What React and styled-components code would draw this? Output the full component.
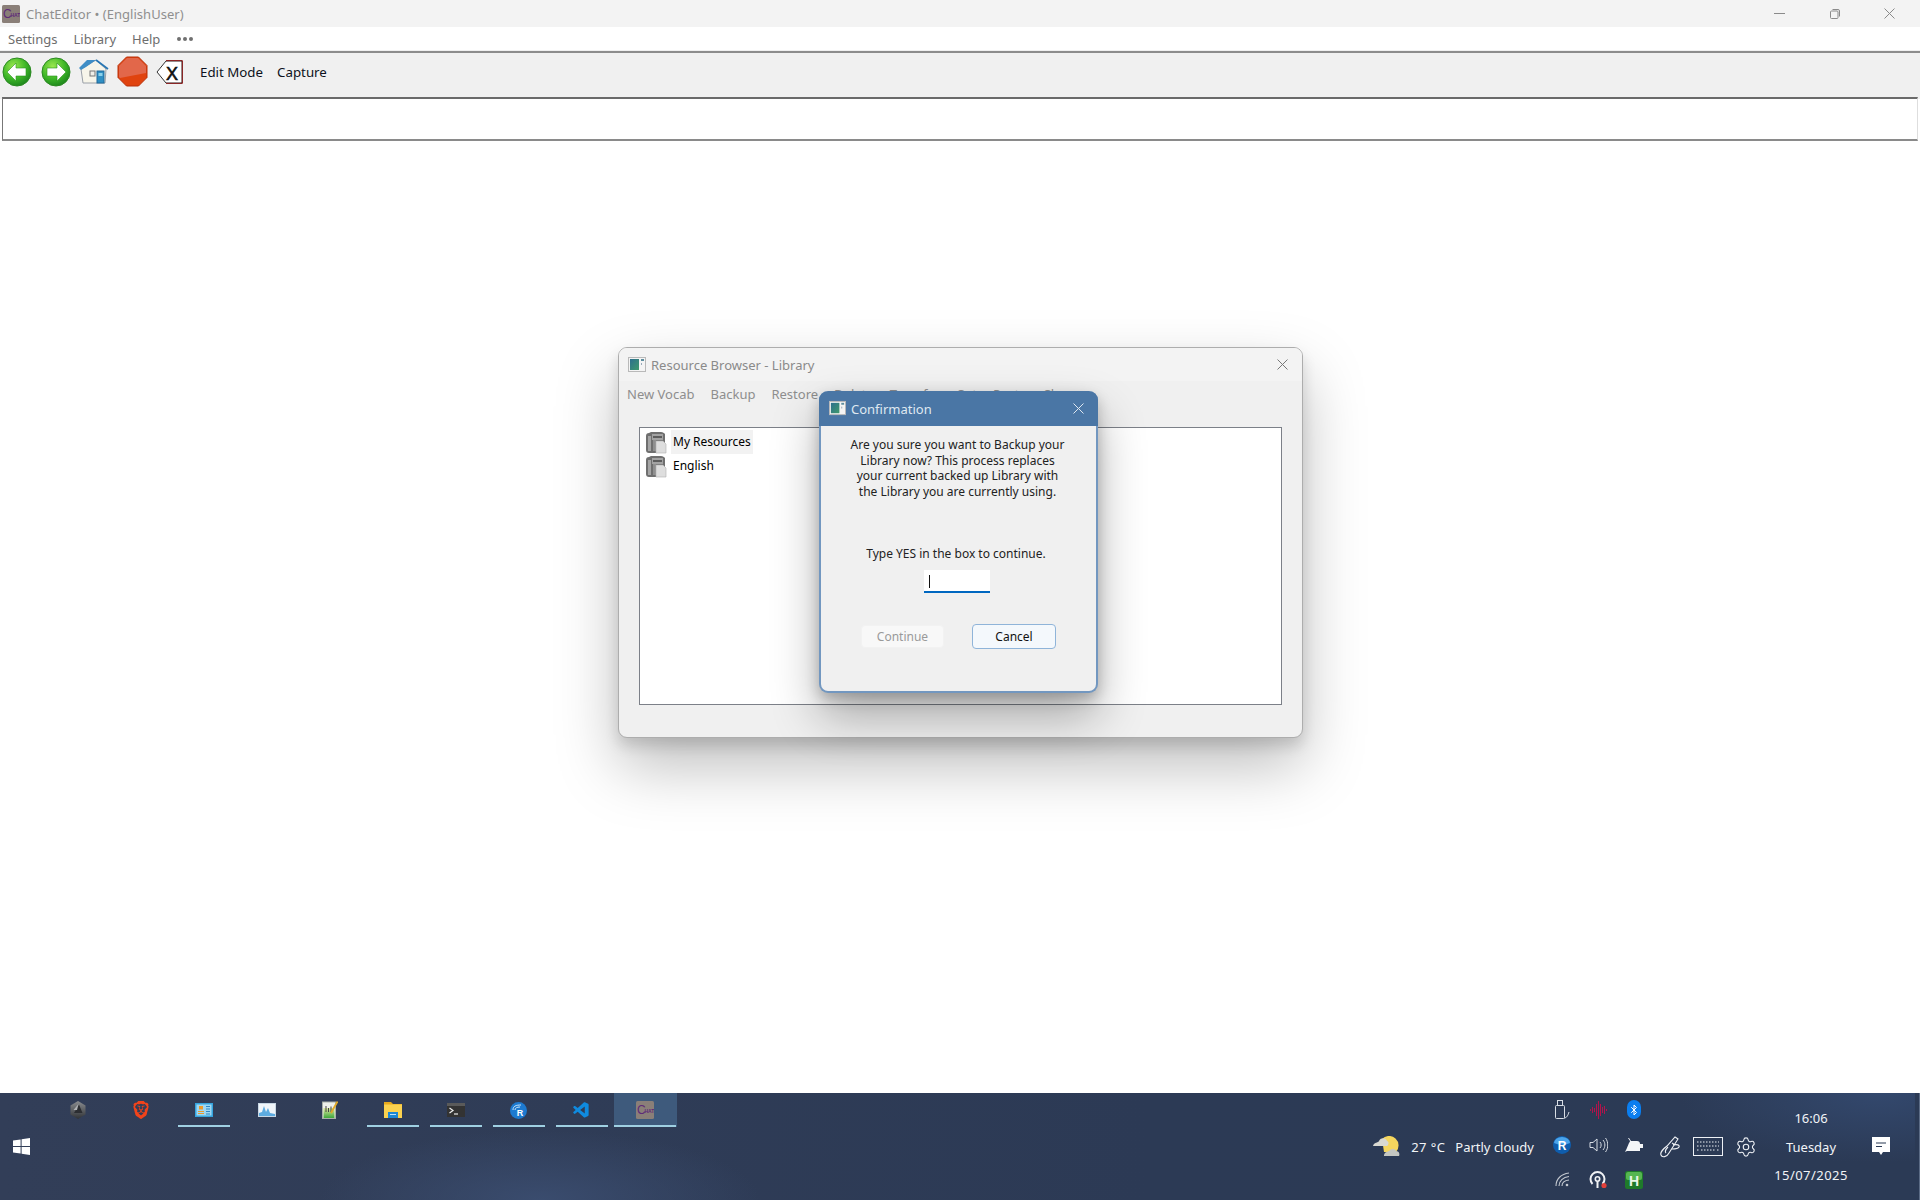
import React from "react";
import styled, { createGlobalStyle } from "styled-components";
import { SiBrave } from "react-icons/si";
import { VscVscode } from "react-icons/vsc";
import { Bluetooth, Settings as Gear } from "lucide-react";

const Global = createGlobalStyle`
  html, body { margin: 0; padding: 0; background: #fff; }
  * { box-sizing: border-box; }
  body { font-family: "Noto Sans", "Liberation Sans", sans-serif; }
  svg { display: block; flex: none; }
`;

const Page = styled.div`
  width: 1920px;
  height: 1200px;
  display: flex;
  flex-direction: column;
  overflow: hidden;
  background: #fff;
`;

const TitleBar = styled.header`
  height: 27px;
  background: #f3f3f3;
  display: flex;
  align-items: center;
  padding-left: 2px;
`;
const TitleText = styled.span`
  margin-left: 6px;
  font-size: 13px;
  letter-spacing: .03px;
  color: #8f8f8f;
  flex: 1;
`;
const WinControls = styled.div`
  display: flex;
  align-items: center;
  margin-right: 3px;
`;
const WinControl = styled.div`
  width: 55px;
  display: flex;
  justify-content: center;
`;

const MenuBar = styled.nav`
  height: 24px;
  background: #fff;
  display: flex;
  align-items: center;
  gap: 16px;
  padding-left: 8px;
  font-size: 13px;
  color: #6e6e6e;
  border-bottom: 1px solid #f0f0f0;
`;
const Dots = styled.span`
  display: flex;
  gap: 2px;
  margin-left: 1px;
  span { width: 4px; height: 4px; border-radius: 50%; background: #707070; }
`;

const Toolbar = styled.div`
  height: 46px;
  background: #f0f0f0;
  border-top: 2px solid #8c8c8c;
  display: flex;
  align-items: center;
  padding: 0 0 7px 2px;
`;
const ToolIcon = styled.div`
  width: ${p => p.$w}px;
  margin-right: ${p => p.$mr}px;
`;
const ToolText = styled.span`
  font-size: 13.3px;
  color: #0d1220;
  margin-right: ${p => p.$mr || 0}px;
`;

const AddressRow = styled.div`
  height: 44px;
  padding: 0 2px;
  background: linear-gradient(#f0f0f0 0 2px, #fff 2px);
`;
const AddressBox = styled.div`
  height: 44px;
  background: #fff;
  border: 1px solid #dedede;
  border-top: 2px solid #6a6a6a;
  border-left: 1px solid #777;
  border-bottom: 2px solid #8a8a8a;
`;

const Desktop = styled.main`
  flex: 1;
  position: relative;
`;

const ResourceWindow = styled.section`
  position: absolute;
  left: 618px;
  top: 206px;
  width: 685px;
  height: 391px;
  background: #f0f0f0;
  border: 1px solid #adadad;
  border-radius: 9px;
  box-shadow: 0 8px 14px rgba(0,0,0,.13), 0 28px 62px rgba(0,0,0,.26);
  display: flex;
  flex-direction: column;
`;
const WinHead = styled.div`
  height: 33px;
  background: #f3f3f3;
  border-radius: 8px 8px 0 0;
  display: flex;
  align-items: center;
  padding: 0 14px 0 9px;
  font-size: 13px;
  color: #8a8a8a;
  gap: 5px;
  span { flex: 1; }
`;
const WinMenu = styled.div`
  display: flex;
  gap: 16px;
  padding: 0 0 0 8px;
  height: 25px;
  align-items: center;
  font-size: 13px;
  color: #8e8e8e;
`;
const ListBox = styled.div`
  margin: 21px 20px 0 20px;
  height: 278px;
  background: #fff;
  border: 1px solid #7c8088;
  padding: 2px 5px;
  display: flex;
  flex-direction: column;
`;
const ListRow = styled.div`
  display: flex;
  align-items: center;
  height: 24px;
  gap: 3px;
  font-size: 12px;
  color: #000;
`;
const ListLabel = styled.span`
  padding: 3px 2px 4px;
  line-height: 17px;
  background: ${p => (p.$sel ? "#f2f2f2" : "transparent")};
`;

const Dialog = styled.section`
  position: absolute;
  left: 819px;
  top: 250px;
  width: 279px;
  height: 302px;
  background: #f0f0f0;
  border: 2px solid #7297c0;
  border-top: 0;
  border-radius: 9px;
  box-shadow: 0 6px 14px rgba(0,0,0,.22), 0 24px 48px rgba(0,0,0,.3);
  display: flex;
  flex-direction: column;
  align-items: center;
`;
const DialogHead = styled.div`
  align-self: stretch;
  margin: 0 -2px;
  height: 35px;
  background: #4a76a5;
  border-radius: 9px 9px 0 0;
  display: flex;
  align-items: center;
  padding: 0 14px 0 10px;
  gap: 5px;
  font-size: 13px;
  color: #dfe8f1;
  span { flex: 1; }
`;
const Message = styled.p`
  margin: 11px 2px 0 0;
  width: 220px;
  font-size: 12px;
  line-height: 15.6px;
  text-align: center;
  color: #222;
`;
const Prompt = styled.p`
  margin: 47px 5px 0 0;
  font-size: 12px;
  line-height: 16px;
  color: #222;
`;
const TypeBox = styled.div`
  margin: 8px 3px 0 0;
  width: 66px;
  height: 23px;
  background: #fff;
  border-bottom: 2px solid #0067c0;
  padding: 5px 0 0 5px;
  i { display: block; width: 1px; height: 13px; background: #111; }
`;
const Buttons = styled.div`
  margin-top: 31px;
  display: flex;
  gap: 28px;
  align-items: center;
`;
const DialogButton = styled.div`
  width: ${p => (p.$primary ? 84 : 83)}px;
  height: ${p => (p.$primary ? 25 : 23)}px;
  display: flex;
  align-items: center;
  justify-content: center;
  font-size: 12px;
  border-radius: 4px;
  color: ${p => (p.$primary ? "#111" : "#9a9a9a")};
  background: ${p => (p.$primary ? "#f4f8fc" : "#f8f8f8")};
  border: 1px solid ${p => (p.$primary ? "#8fb4d9" : "#f2f2f2")};
`;

const Taskbar = styled.footer`
  height: 107px;
  flex: none;
  color: #f2f4f7;
  display: flex;
  border-right: 1px solid #5b6b85;
  box-shadow: inset -4px 0 0 #2b3a55;
  background:
    radial-gradient(ellipse 220px 70px at 540px 107px, #3a4c6e 0%, rgba(58,76,110,0) 100%),
    radial-gradient(ellipse 200px 70px at 1880px 0, #33486d 0%, rgba(51,72,109,0) 100%),
    linear-gradient(90deg, #323e58, #2c3a55 60%, #2b3a55);
`;
const TaskLeft = styled.div`
  flex: 1;
  display: flex;
  flex-direction: column;
`;
const TaskRow = styled.div`
  display: flex;
  padding-left: 47px;
  height: 34px;
`;
const TaskButton = styled.div`
  width: 63px;
  height: 34px;
  display: flex;
  align-items: center;
  justify-content: center;
  position: relative;
  padding: 0 2px 0 0;
  background: ${p => (p.$active ? "#3e5a7c" : "transparent")};
  &::after {
    content: "";
    display: ${p => (p.$running ? "block" : "none")};
    position: absolute;
    bottom: 0;
    left: ${p => (p.$active ? 0 : 5)}px;
    right: ${p => (p.$active ? 1 : 6)}px;
    height: 2px;
    background: #9fd0e2;
  }
`;
const StartButton = styled.div`
  margin: 11px 0 0 13px;
  width: 17px;
`;
const Weather = styled.div`
  display: flex;
  align-items: center;
  font-size: 13px;
  margin-right: 10px;
`;
const WeatherTemp = styled.span`
  margin: 0 10px 0 11px;
  letter-spacing: .4px;
`;
const Tray = styled.div`
  display: grid;
  grid-template-columns: repeat(3, 36px);
  grid-template-rows: repeat(3, 35px);
  align-items: center;
  justify-items: center;
  width: 108px;
  align-self: flex-start;
  margin-top: -1px;
`;
const TrayExtras = styled.div`
  display: flex;
  align-items: center;
  gap: 12px;
  margin-left: 8px;
`;
const Clock = styled.div`
  width: 92px;
  margin-left: 8px;
  align-self: flex-start;
  padding-top: 16px;
  display: flex;
  flex-direction: column;
  align-items: center;
  font-size: 13px;
  line-height: 18px;
  gap: 11px;
`;
const ClockDate = styled.span`
  margin-top: -1px;
  letter-spacing: .45px;
`;
const Notify = styled.div`
  margin: 0 29px 0 15px;
  align-self: center;
`;

const AppLogo = ({ s = 18 }) => (
  <svg width={s} height={s} viewBox="0 0 18 18">
    <rect width="18" height="18" rx="1.5" fill="#8a7f78" />
    <text x="1" y="13" fontSize="12" fontFamily="Liberation Sans" fill="#5e2a78">C</text>
    <text x="8.5" y="12" fontSize="5" fontWeight="700" fontFamily="Liberation Sans" fill="#5e2a78">HAT</text>
  </svg>
);

const WinIcon = ({ s = 18 }) => (
  <svg width={s} height={s} viewBox="0 0 18 18">
    <defs>
      <linearGradient id="wi" x1="0" y1="0" x2="1" y2="1">
        <stop offset="0" stopColor="#2d6f8e" />
        <stop offset="1" stopColor="#3f9a6c" />
      </linearGradient>
    </defs>
    <rect x=".5" y="1.5" width="17" height="14" fill="#f4f4f4" stroke="#b9b9b9" />
    <rect x="2" y="3" width="9" height="11" fill="url(#wi)" />
    <rect x="13" y="3" width="3" height="2" fill="#5d8d9e" />
    <rect x="13" y="7" width="1" height="2" fill="#9ab" />
  </svg>
);

const Cross = ({ s = 11, c = "#777", w = 1 }) => (
  <svg width={s} height={s} viewBox="0 0 11 11" fill="none" stroke={c} strokeWidth={w}>
    <path d="M.5 .5 L10.5 10.5 M10.5 .5 L.5 10.5" />
  </svg>
);

const MinimizeGlyph = () => (
  <svg width="11" height="11" viewBox="0 0 11 11" stroke="#8a8a8a">
    <path d="M0 5.5 H11" />
  </svg>
);

const GreenArrow = ({ dir, id }) => (
  <svg width="30" height="30" viewBox="0 0 30 30">
    <defs>
      <radialGradient id={id} cx=".38" cy=".3" r=".8">
        <stop offset="0" stopColor="#9be84f" />
        <stop offset=".55" stopColor="#3db627" />
        <stop offset="1" stopColor="#157a1a" />
      </radialGradient>
    </defs>
    <circle cx="15" cy="15" r="14" fill={`url(#${id})`} stroke="#2c8a22" />
    <path
      d={dir === "l" ? "M5 15 L14 6 V11 H24 V19 H14 V24 Z" : "M25 15 L16 6 V11 H6 V19 H16 V24 Z"}
      fill="#fff"
      stroke="#2a9420"
      strokeWidth=".6"
    />
  </svg>
);

const HouseIcon = () => (
  <svg width="31" height="27" viewBox="0 0 31 27">
    <path d="M3 11 L5 25 L27 25 L28 11 L18 2 Z" fill="#f7f5ea" stroke="#9aa0a8" />
    <path d="M1 10 L9 2 H18 L8 9 L3 12 Z" fill="#3f8ec6" />
    <path d="M18 2 L30 11" fill="none" stroke="#2876b4" strokeWidth="1.6" />
    <rect x="12" y="13" width="5" height="5" fill="#f0efe8" stroke="#777" />
    <rect x="19" y="13" width="7" height="12" fill="#2f8fc4" stroke="#20689a" />
    <rect x="20.5" y="15" width="4" height="3" fill="#8cd1ea" />
  </svg>
);

const StopIcon = () => (
  <svg width="31" height="31" viewBox="0 0 31 31">
    <path d="M9.5 1 H21.5 L30 9.5 V21.5 L21.5 30 H9.5 L1 21.5 V9.5 Z" fill="#e0430f" stroke="#b8300a" />
    <path d="M10 2 H21 L29 10 V17 L3 22 L2 21 V10 Z" fill="#e2674a" />
  </svg>
);

const ClearIcon = () => (
  <svg width="27" height="24" viewBox="0 0 27 24">
    <path d="M1 12 L10 1 H26 V23 H10 Z" fill="#fff" stroke="#000" strokeWidth=".8" />
    <path d="M10 .6 H26.4 V23.4 H10" fill="none" stroke="#8a1a1a" strokeWidth="1" />
    <text x="10" y="20" fontSize="18" fontWeight="400" fontFamily="Liberation Sans" fill="#111" stroke="#111" strokeWidth=".6">X</text>
  </svg>
);

const LibIcon = () => (
  <svg width="23" height="23" viewBox="0 0 23 23">
    <path d="M1 5 C1 3 2 2 4 2 L6 1 H16 C18 1 19 2 20 3 V21 C20 22 19 22 18 22 H4 C2 22 1 21 1 19 Z" fill="#6f6f6f" />
    <rect x="3" y="5" width="3" height="15" fill="#a5a5a5" />
    <rect x="7" y="3" width="11" height="6" fill="#a3a3a3" />
    <rect x="8" y="5" width="9" height="2" fill="#5d5d5d" />
    <rect x="8" y="9" width="3" height="11" fill="#8f8f8f" />
    <path d="M11 10 H18 L21 13 V22 H11 Z" fill="#dedede" stroke="#b0b0b0" strokeWidth=".6" />
  </svg>
);

const HexShield = () => (
  <svg width="16" height="18" viewBox="0 0 16 18">
    <defs>
      <linearGradient id="hex" x1="0" y1="0" x2="0" y2="1">
        <stop offset="0" stopColor="#8b8d90" />
        <stop offset="1" stopColor="#2f3236" />
      </linearGradient>
    </defs>
    <path d="M8 0 L15.5 4.5 V13.5 L8 18 L.5 13.5 V4.5 Z" fill="url(#hex)" />
    <path d="M9 3.5 L12.5 12 H4 Z" fill="#2c2e32" />
    <path d="M3.5 9 L8.5 3 L7 9 Z" fill="#b0b2b5" />
  </svg>
);

const ChartApp = () => (
  <svg width="18" height="14" viewBox="0 0 18 14">
    <rect width="18" height="14" fill="#35a4de" />
    <rect x="1.5" y="1.5" width="15" height="11" fill="#9fd7f2" />
    <path d="M4 3 H8 V6.5 H4 Z" fill="#ec9a2c" />
    <path d="M3 8.5 H9 M3 10.5 H9" stroke="#e79b30" />
    <path d="M11 3.5 H15 M11 6 H15 M11 8.5 H15 M11 11 H15" stroke="#2f86c4" />
  </svg>
);

const MonitorApp = () => (
  <svg width="18" height="14" viewBox="0 0 18 14">
    <rect width="18" height="14" fill="#c8d7e4" />
    <rect x="1" y="1" width="16" height="12" fill="#f0f5f9" />
    <path d="M1 10 L4 9 L6 3 L8 9 L10 5 L12 10 L17 11 V13 H1 Z" fill="#5cabe0" />
  </svg>
);

const NotepadApp = () => (
  <svg width="16" height="18" viewBox="0 0 16 18">
    <defs>
      <linearGradient id="np" x1="0" y1="0" x2="0" y2="1">
        <stop offset="0" stopColor="#dfe8a0" />
        <stop offset="1" stopColor="#3ea83a" />
      </linearGradient>
    </defs>
    <rect x=".5" y="1" width="13" height="16.5" fill="#eef0ea" stroke="#aab0a8" />
    <rect x="1.5" y="7" width="11" height="10" fill="url(#np)" />
    <path d="M4 5 V11 M6.5 7 V11 M9 5.5 V11" stroke="#444" strokeWidth="1" />
    <path d="M15.5 .5 L9 12" stroke="#e0a828" strokeWidth="1.8" />
  </svg>
);

const FolderApp = () => (
  <svg width="18" height="16" viewBox="0 0 18 16">
    <path d="M0 0 H7 L9 2 H18 V16 H0 Z" fill="#e7a91d" />
    <rect y="2.5" width="18" height="13.5" fill="#fbd24f" />
    <rect x="4" y="10" width="10" height="6" fill="#1b87d6" />
    <rect x="6" y="12" width="6" height="1" fill="#bfe3f9" />
  </svg>
);

const TermApp = () => (
  <svg width="18" height="14" viewBox="0 0 18 14">
    <rect width="18" height="14" fill="#333" />
    <rect width="18" height="3" fill="#5a5a5a" />
    <path d="M2.5 5 L6 7.5 L2.5 10" fill="none" stroke="#eee" strokeWidth="1.2" />
    <path d="M7 11 H11" stroke="#eee" strokeWidth="1.2" />
  </svg>
);

const RApp = () => (
  <svg width="17" height="17" viewBox="0 0 17 17">
    <circle cx="8.5" cy="8.5" r="8.5" fill="#1d7ad0" />
    <path d="M3 8 C3 4 6 3 11 3 M5 8 C5 6 7 5 10 5" fill="none" stroke="#cfe7fa" />
    <text x="10" y="14" textAnchor="middle" fontSize="9" fontWeight="700" fontFamily="Liberation Sans" fill="#fff">R</text>
  </svg>
);

const UsbIcon = () => (
  <svg width="15" height="19" viewBox="0 0 15 19" fill="none" stroke="#d8dde4">
    <rect x=".5" y="5.5" width="9" height="13" rx="1" />
    <rect x="2.5" y=".5" width="5" height="5" />
    <path d="M9 18 C12 18 13 15 14 12" />
  </svg>
);

const WaveIcon = () => (
  <svg width="17" height="18" viewBox="0 0 17 18" stroke="#b3124a" strokeWidth="1">
    <path d="M.5 8 V10 M2.5 6 V12 M4.5 7 V11 M6.5 3 V15 M8.5 0 V18 M10.5 3 V15 M12.5 6 V12 M14.5 5 V13 M16.5 8 V10" />
  </svg>
);

const BtBadge = styled.div`
  width: 14px;
  height: 19px;
  border-radius: 7px;
  background: #0a7ef0;
  display: flex;
  align-items: center;
  justify-content: center;
`;

const RBall = () => (
  <svg width="18" height="18" viewBox="0 0 18 18">
    <circle cx="9" cy="9" r="9" fill="#0f5dad" />
    <path d="M1 7 A8 6 0 0 1 17 7 A10 4 0 0 1 1 7Z" fill="#4aa3ea" />
    <text x="9" y="13.5" textAnchor="middle" fontSize="12" fontWeight="700" fontFamily="Liberation Sans" fill="#fff">R</text>
  </svg>
);

const SpeakerIcon = () => (
  <svg width="19" height="16" viewBox="0 0 19 16" fill="none" stroke="#d8dde4">
    <path d="M1 5.5 H4 L8 2 V14 L4 10.5 H1 Z" />
    <path d="M11 5 C12.5 6.5 12.5 9.5 11 11 M14 3 C16.5 6 16.5 10 14 13 M16.5 1 C19.5 5 19.5 11 16.5 15" />
  </svg>
);

const PlugIcon = () => (
  <svg width="18" height="14" viewBox="0 0 18 14" fill="#f4f6f8">
    <path d="M0 14 L1.5 11 L4 5 C4.5 4 5 4 5 3 L3 0 H4 L6 3 H12 C14 3 15 4 15 6 V13 H2 Z" />
    <path d="M15 6 H18 V10 H15 Z" />
  </svg>
);

const PenIcon = () => (
  <svg width="21" height="22" viewBox="0 0 21 22" fill="none" stroke="#eef1f5" strokeWidth="1.1">
    <path d="M15 1 L18 3 L9 17 C7 21 2 22 1 19 C0 17 3 13 7 10 Z" />
    <path d="M12 7 L15 9 M13 9 C17 8 20 9 19 11 C18 13 14 13 12 13" />
    <path d="M8 11 C5 14 5 16 6 17" />
  </svg>
);

const KeyboardIcon = () => (
  <svg width="30" height="19" viewBox="0 0 30 19" fill="none" stroke="#eef1f5">
    <rect x=".5" y=".5" width="29" height="18" />
    <path d="M4 5 H26 M4 9 H26 M8 13 H22 M4 13 H6 M24 13 H26" strokeDasharray="1.5 1.5" />
  </svg>
);

const WifiIcon = () => (
  <svg width="15" height="15" viewBox="0 0 15 15" fill="none" stroke="#c4c9d0" strokeWidth="1.1">
    <path d="M1 14 C1 7 6 2 14 1 M4 14 C4 9 8 5 14 4.5 M7 14 C7 11 9 8.5 14 8" />
    <circle cx="12" cy="13" r="1.3" fill="#c4c9d0" stroke="none" />
  </svg>
);

const HotspotIcon = () => (
  <svg width="18" height="18" viewBox="0 0 18 18" fill="none" stroke="#f0f2f5" strokeWidth="2">
    <path d="M3.5 13 A7 7 0 1 1 13.5 13" />
    <circle cx="8.5" cy="8" r="2.2" strokeWidth="1.6" />
    <path d="M8.5 10 V17" />
    <circle cx="15" cy="14.5" r="2.6" fill="#e3403a" stroke="none" />
  </svg>
);

const HBadge = () => (
  <svg width="18" height="18" viewBox="0 0 18 18">
    <rect width="18" height="18" rx="2.5" fill="#1f7a2a" />
    <rect x="1" y="1" width="16" height="8" rx="2" fill="#56b650" />
    <text x="9" y="14.5" textAnchor="middle" fontSize="14" fontWeight="700" fontFamily="Liberation Sans" fill="#eaf6e8">H</text>
  </svg>
);

const WeatherIcon = () => (
  <svg width="28" height="22" viewBox="0 0 28 22">
    <path d="M10 3 A9 9 0 0 1 24 16 H12 Z" fill="#f5d65e" />
    <path d="M1 10 C2 6 6 7 7 5 C9 1 14 2 15 5 C17 5 17 9 15 10 Z" fill="#d9d9d2" />
    <path d="M12 19 C13 15 17 16 18 14 C20 12 24 13 24 15 C27 15 28 18 27 20 H12 Z" fill="#c5c7c2" />
  </svg>
);

const RestoreIcon = () => (
  <svg width="10" height="10" viewBox="0 0 10 10" fill="none" stroke="#8a8a8a">
    <rect x=".5" y="2" width="7.5" height="7.5" rx="1" />
    <path d="M2.5 .5 H8 A1.5 1.5 0 0 1 9.5 2 V7.5" />
  </svg>
);

const WindowsLogo = () => (
  <svg width="17" height="17" viewBox="0 0 17 17" fill="#fff">
    <path d="M0 2.5 L7.6 1.4 V8 H0 Z M8.6 1.2 L17 0 V8 H8.6 Z M0 9 H7.6 V15.6 L0 14.5 Z M8.6 9 H17 V17 L8.6 15.8 Z" />
  </svg>
);

const NotifyIcon = () => (
  <svg width="18" height="19" viewBox="0 0 18 19">
    <path d="M0 0 H18 V15 H11 L9 18 L7 15 H0 Z" fill="#fff" />
    <path d="M4 6 H14 M4 9.5 H10" stroke="#2b3a55" strokeWidth="1.2" />
  </svg>
);

const tasks = [
  { key: "a", icon: <HexShield /> },
  { key: "b", icon: <SiBrave size={18} color="#f2431a" /> },
  { key: "c", icon: <ChartApp />, running: true },
  { key: "d", icon: <MonitorApp /> },
  { key: "e", icon: <NotepadApp /> },
  { key: "f", icon: <FolderApp />, running: true },
  { key: "g", icon: <TermApp />, running: true },
  { key: "h", icon: <RApp />, running: true },
  { key: "i", icon: <VscVscode size={19} color="#0f8be0" />, running: true },
  { key: "j", icon: <AppLogo />, running: true, active: true },
];

export default function App() {
  return (
    <Page>
      <Global />
      <TitleBar>
        <AppLogo />
        <TitleText>ChatEditor • (EnglishUser)</TitleText>
        <WinControls>
          <WinControl><MinimizeGlyph /></WinControl>
          <WinControl><RestoreIcon /></WinControl>
          <WinControl><Cross c="#8a8a8a" /></WinControl>
        </WinControls>
      </TitleBar>
      <MenuBar>
        <span>Settings</span>
        <span>Library</span>
        <span>Help</span>
        <Dots><span /><span /><span /></Dots>
      </MenuBar>
      <Toolbar>
        <ToolIcon $w={30} $mr={9}><GreenArrow dir="l" id="ga" /></ToolIcon>
        <ToolIcon $w={30} $mr={7}><GreenArrow dir="r" id="gb" /></ToolIcon>
        <ToolIcon $w={31} $mr={8}><HouseIcon /></ToolIcon>
        <ToolIcon $w={31} $mr={8}><StopIcon /></ToolIcon>
        <ToolIcon $w={27} $mr={17}><ClearIcon /></ToolIcon>
        <ToolText $mr={14}>Edit Mode</ToolText>
        <ToolText>Capture</ToolText>
      </Toolbar>
      <AddressRow><AddressBox /></AddressRow>
      <Desktop>
        <ResourceWindow>
          <WinHead>
            <WinIcon />
            <span>Resource Browser - Library</span>
            <Cross s={11} c="#777" />
          </WinHead>
          <WinMenu>
            <span>New Vocab</span>
            <span>Backup</span>
            <span>Restore</span>
            <span>Delete</span>
            <span>Transfer</span>
            <span>Cut</span>
            <span>Paste</span>
            <span>Close</span>
          </WinMenu>
          <ListBox>
            <ListRow><LibIcon /><ListLabel $sel>My Resources</ListLabel></ListRow>
            <ListRow><LibIcon /><ListLabel>English</ListLabel></ListRow>
          </ListBox>
        </ResourceWindow>
        <Dialog>
          <DialogHead>
            <WinIcon s={17} />
            <span>Confirmation</span>
            <Cross s={11} c="#dfe8f1" />
          </DialogHead>
          <Message>
            Are you sure you want to Backup your Library now? This process replaces
            your current backed up Library with the Library you are currently using.
          </Message>
          <Prompt>Type YES in the box to continue.</Prompt>
          <TypeBox><i /></TypeBox>
          <Buttons>
            <DialogButton>Continue</DialogButton>
            <DialogButton $primary>Cancel</DialogButton>
          </Buttons>
        </Dialog>
      </Desktop>
      <Taskbar>
        <TaskLeft>
          <TaskRow>
            {tasks.map(t => (
              <TaskButton key={t.key} $running={t.running} $active={t.active}>{t.icon}</TaskButton>
            ))}
          </TaskRow>
          <StartButton><WindowsLogo /></StartButton>
        </TaskLeft>
        <Weather>
          <WeatherIcon />
          <WeatherTemp>27 °C</WeatherTemp>
          <span>Partly cloudy</span>
        </Weather>
        <Tray>
          <UsbIcon />
          <WaveIcon />
          <BtBadge><Bluetooth size={12} color="#fff" strokeWidth={2} /></BtBadge>
          <RBall />
          <SpeakerIcon />
          <PlugIcon />
          <WifiIcon />
          <HotspotIcon />
          <HBadge />
        </Tray>
        <TrayExtras>
          <PenIcon />
          <KeyboardIcon />
          <Gear size={22} color="#eef1f5" strokeWidth={1.2} />
        </TrayExtras>
        <Clock>
          <span>16:06</span>
          <span>Tuesday</span>
          <ClockDate>15/07/2025</ClockDate>
        </Clock>
        <Notify><NotifyIcon /></Notify>
      </Taskbar>
    </Page>
  );
}
